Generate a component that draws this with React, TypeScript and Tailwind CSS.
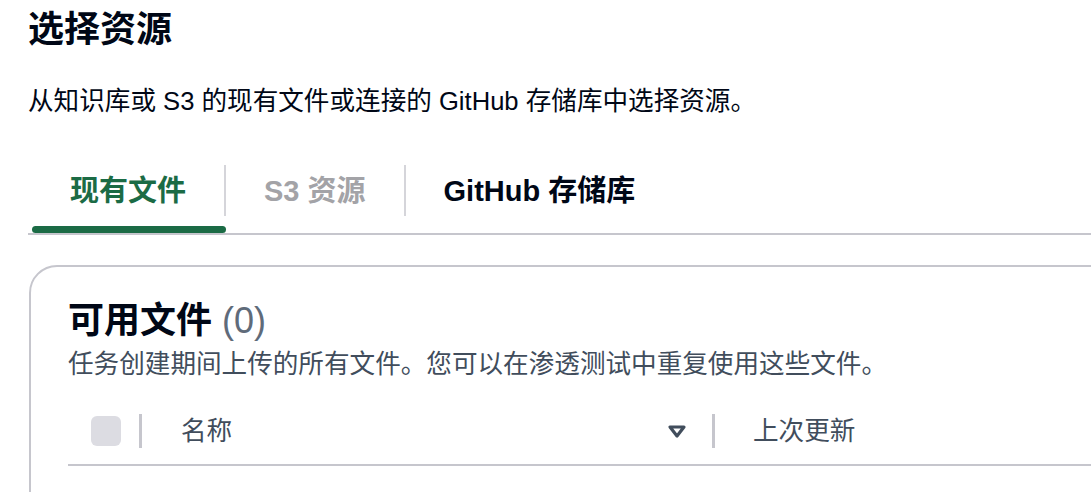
const font = "font-['Liberation_Sans','Noto_Sans_CJK_SC',sans-serif]"

type Tab = { label: string; state: 'active' | 'disabled' | 'normal'; last?: boolean }

const tabs: Tab[] = [
  { label: '现有文件', state: 'active' },
  { label: 'S3 资源', state: 'disabled' },
  { label: 'GitHub 存储库', state: 'normal', last: true },
]

function SortIcon() {
  return (
    <svg width="20" height="15" viewBox="0 0 20 15" className="shrink-0">
      <path d="M3 3 L17 3 L10 12 Z" fill="none" stroke="#414d5c" strokeWidth="3.2" strokeLinejoin="round" />
    </svg>
  )
}

export default function App() {
  return (
    <div className={`w-[1091px] h-[492px] overflow-hidden bg-white text-[#000716] ${font}`}>
      {/* header */}
      <div className="pl-[28px] pt-[8px]">
        <h1 className="text-[36px] leading-[44px] font-bold">选择资源</h1>
        <p className="mt-[31px] text-[25.6px] leading-[36px] text-[#000716]">
          从知识库或 S3 的现有文件或连接的 GitHub 存储库中选择资源。
        </p>
      </div>

      {/* tabs */}
      <div className="ml-[28px] mt-[46px] flex border-b-2 border-[#c6c6cd]">
        <div className="w-[4px]" />
        {tabs.map((t) => (
          <div key={t.label} className="flex flex-col">
            <div
              className={`h-[51px] flex items-center px-[38px] text-[29px] leading-[36px] font-bold ${
                t.last ? '' : 'border-r-2 border-[#d5d5da]'
              } ${
                t.state === 'active'
                  ? 'text-[#1b6b45]'
                  : t.state === 'disabled'
                  ? 'text-[#a3a3a7]'
                  : 'text-[#000716]'
              }`}
            >
              {t.label}
            </div>
            <div
              className={`mt-[10px] h-[7px] rounded-full ${t.state === 'active' ? 'bg-[#1b6b45]' : 'bg-transparent'}`}
            />
          </div>
        ))}
      </div>

      {/* card */}
      <div className="ml-[29px] mt-[30px] w-[1100px] h-[300px] border-2 border-[#c6c6cd] rounded-[28px] pl-[37px] pt-[32px]">
        <h2 className="text-[36px] leading-[44px] font-bold text-[#000716]">
          可用文件 <span className="font-normal text-[#5f6b7a]">(0)</span>
        </h2>
        <p className="mt-[3px] text-[25.6px] leading-[36px] text-[#414d5c]">
          任务创建期间上传的所有文件。您可以在渗透测试中重复使用这些文件。
        </p>

        {/* table header */}
        <div className="mt-[23px] pt-[9px] pb-[16px] flex items-center border-b-2 border-[#c6c6cd] text-[25.6px] leading-[34px] text-[#414d5c]">
          <div className="ml-[23px] w-[30px] h-[30px] rounded-[6px] bg-[#dcdce2]" />
          <div className="ml-[18px] w-[3px] h-[34px] bg-[#c6c6cd]" />
          <div className="w-[570px] flex items-center pl-[39px] pr-[25px]">
            <span>名称</span>
            <div className="flex-1" />
            <SortIcon />
          </div>
          <div className="w-[3px] h-[34px] bg-[#c6c6cd]" />
          <div className="pl-[38px]">上次更新</div>
        </div>
      </div>
    </div>
  )
}
